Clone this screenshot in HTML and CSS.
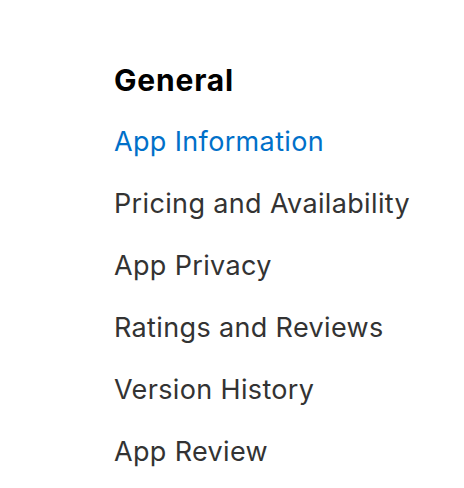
FILE: index.html
```html
<!DOCTYPE html>
<html>
<head>
	<meta charset="utf-8">
	<title>General</title>
	<link rel="stylesheet" href="styles.css">
</head>
<body>
	<div class="sidebar">
		<h2 class="title">General</h2>
		<ul class="menu">
			<li class="item active">App Information</li>
			<li class="item">Pricing and Availability</li>
			<li class="item">App Privacy</li>
			<li class="item">Ratings and Reviews</li>
			<li class="item">Version History</li>
			<li class="item">App Review</li>
		</ul>
	</div>
</body>
</html>
```

FILE: styles.css
```css
* {
	margin: 0;
	padding: 0;
}
body {
	background: #fff;
	font-family: Inter, "Liberation Sans", sans-serif;
}
.sidebar {
	padding: 62px 0 0 114px;
}
.title {
	font-size: 30px;
	font-weight: 700;
	letter-spacing: 0.8px;
	color: #000;
	line-height: 36px;
}
.menu {
	list-style: none;
	margin-top: 13px;
}
.item {
	font-size: 27px;
	letter-spacing: 0.35px;
	line-height: 62px;
	color: #333;
}
.active {
	color: #0070c9;
}
```
